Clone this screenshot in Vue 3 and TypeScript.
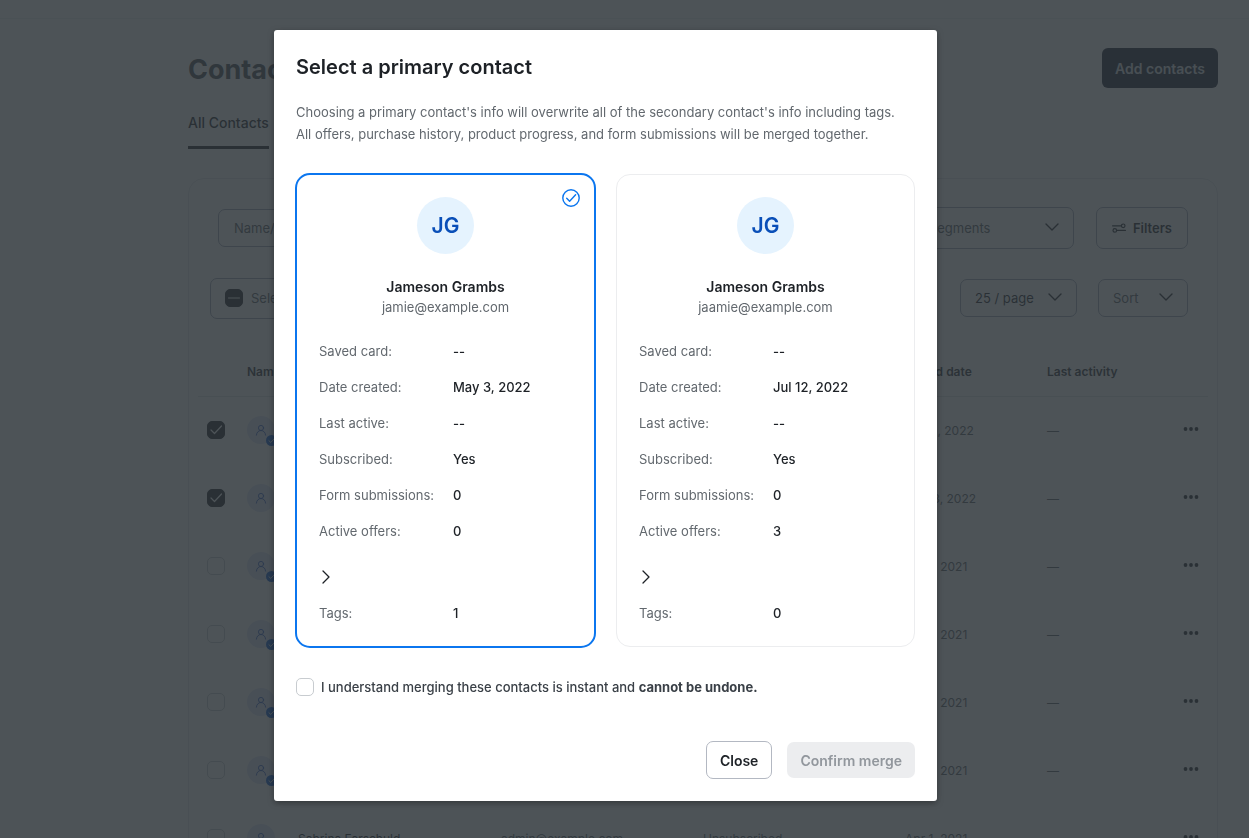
<script setup lang="ts">
import { ref } from 'vue'

interface Detail {
  label: string
  value: string
}

interface Candidate {
  id: string
  name: string
  email: string
  details: Detail[]
  tags: number
}

interface ContactRow {
  name: string
  email: string
  status: string
  added: string
  checked: boolean
  verified: boolean
}

const candidates: Candidate[] = [
  {
    id: 'jamie',
    name: 'Jameson Grambs',
    email: 'jamie@example.com',
    details: [
      { label: 'Saved card:', value: '--' },
      { label: 'Date created:', value: 'May 3, 2022' },
      { label: 'Last active:', value: '--' },
      { label: 'Subscribed:', value: 'Yes' },
      { label: 'Form submissions:', value: '0' },
      { label: 'Active offers:', value: '0' },
    ],
    tags: 1,
  },
  {
    id: 'jaamie',
    name: 'Jameson Grambs',
    email: 'jaamie@example.com',
    details: [
      { label: 'Saved card:', value: '--' },
      { label: 'Date created:', value: 'Jul 12, 2022' },
      { label: 'Last active:', value: '--' },
      { label: 'Subscribed:', value: 'Yes' },
      { label: 'Form submissions:', value: '0' },
      { label: 'Active offers:', value: '3' },
    ],
    tags: 0,
  },
]

const rows = ref<ContactRow[]>([
  { name: '', email: '', status: '', added: 'Jul 12, 2022', checked: true, verified: true },
  { name: '', email: '', status: '', added: 'May 3, 2022', checked: true, verified: false },
  { name: '', email: '', status: '', added: 'Apr 1, 2021', checked: false, verified: true },
  { name: '', email: '', status: '', added: 'Apr 1, 2021', checked: false, verified: true },
  { name: '', email: '', status: '', added: 'Apr 1, 2021', checked: false, verified: true },
  { name: '', email: '', status: '', added: 'Apr 1, 2021', checked: false, verified: true },
  { name: 'Sabrina Farschuld', email: 'admin@example.com', status: 'Unsubscribed', added: 'Apr 1, 2021', checked: false, verified: true },
])

const primary = ref('jamie')
const understood = ref(false)
</script>

<template>
  <div class="page">
    <div class="topbar"></div>
    <main class="content">
      <header class="head">
        <h1>Contacts</h1>
        <button type="button" class="add">Add contacts</button>
      </header>
      <nav class="tabs"><a href="#all">All Contacts</a></nav>

      <section class="panel">
        <div class="bar">
          <input class="field search" type="text" placeholder="Name/Email" aria-label="Search contacts" />
          <span class="pick segments">
            <select class="field" aria-label="Segments"><option>Segments</option></select>
            <svg class="down" viewBox="0 0 14 8"><path d="M1 1l6 6 6-6" /></svg>
          </span>
          <button type="button" class="field filters">
            <svg viewBox="0 0 14 10"><circle cx="11.200" cy="2.800" r="1.800" /><path d="M0.600 2.800h8.600" /><circle cx="2.800" cy="7.400" r="1.800" /><path d="M4.800 7.400h8.600" /></svg>
            Filters
          </button>
        </div>
        <div class="bar second">
          <label class="field all">
            <input type="checkbox" class="tick partial" checked />
            Selected
          </label>
          <span class="pick size">
            <select class="field" aria-label="Page size"><option>25 / page</option></select>
            <svg class="down" viewBox="0 0 14 8"><path d="M1 1l6 6 6-6" /></svg>
          </span>
          <span class="pick sort">
            <select class="field" aria-label="Sort"><option>Sort</option></select>
            <svg class="down" viewBox="0 0 14 8"><path d="M1 1l6 6 6-6" /></svg>
          </span>
        </div>

        <table>
          <colgroup>
            <col class="c-tick" /><col class="c-icon" /><col class="c-name" /><col class="c-mail" />
            <col class="c-status" /><col class="c-date" /><col /><col class="c-more" />
          </colgroup>
          <thead>
            <tr>
              <th></th>
              <th colspan="2">Name</th>
              <th>Email</th>
              <th>Status</th>
              <th>Added date</th>
              <th>Last activity</th>
              <th></th>
            </tr>
          </thead>
          <tbody>
            <tr v-for="(row, i) in rows" :key="i">
              <td><input v-model="row.checked" type="checkbox" class="tick" :aria-label="`Select row ${i + 1}`" /></td>
              <td>
                <span class="person">
                  <svg class="user" viewBox="0 0 14 14"><circle cx="7" cy="4.6" r="3" /><path d="M1.6 13c.3-3.3 2.5-5.4 5.4-5.4s5.100 2.100 5.400 5.400" /></svg>
                  <svg v-if="row.verified" class="seal" viewBox="0 0 12 12"><circle cx="6" cy="6" r="6" /><path d="M3.200 6.200l2 1.900 3.600-3.900" /></svg>
                </span>
              </td>
              <td class="strong">{{ row.name }}</td>
              <td>{{ row.email }}</td>
              <td>{{ row.status }}</td>
              <td>{{ row.added }}</td>
              <td>—</td>
              <td>
                <button type="button" class="more" aria-label="More actions">
                  <svg viewBox="0 0 16 4"><circle cx="2.500" cy="2" r="1.900" /><circle cx="8" cy="2" r="1.900" /><circle cx="13.500" cy="2" r="1.900" /></svg>
                </button>
              </td>
            </tr>
          </tbody>
        </table>
      </section>
    </main>
  </div>

  <div class="overlay">
    <div class="modal" role="dialog" aria-modal="true" aria-labelledby="merge-title">
      <h2 id="merge-title">Select a primary contact</h2>
      <p class="intro">
        Choosing a primary contact's info will overwrite all of the secondary contact's info including tags.<br />
        All offers, purchase history, product progress, and form submissions will be merged together.
      </p>

      <div class="cards">
        <article v-for="c in candidates" :key="c.id" class="card" :class="{ selected: primary === c.id }">
          <label class="choose">
            <input v-model="primary" type="radio" name="primary" :value="c.id" :aria-label="`Use ${c.email} as primary`" />
            <svg v-if="primary === c.id" viewBox="0 0 18 18"><circle cx="9" cy="9" r="8.200" /><path d="M4.700 9.300l2.900 2.900 6-6.500" /></svg>
          </label>
          <div class="initials">JG</div>
          <h3>{{ c.name }}</h3>
          <p class="mail">{{ c.email }}</p>
          <dl>
            <div v-for="d in c.details" :key="d.label" class="line">
              <dt>{{ d.label }}</dt>
              <dd>{{ d.value }}</dd>
            </div>
          </dl>
          <button type="button" class="expand" aria-label="Show offers">
            <svg viewBox="0 0 8 14"><path d="M1 1l6 6-6 6" /></svg>
          </button>
          <dl>
            <div class="line">
              <dt>Tags:</dt>
              <dd>{{ c.tags }}</dd>
            </div>
          </dl>
        </article>
      </div>

      <label class="consent">
        <input v-model="understood" type="checkbox" />
        <span>I understand merging these contacts is instant and <strong>cannot be undone.</strong></span>
      </label>

      <footer>
        <button type="button" class="close">Close</button>
        <button type="button" class="confirm" :disabled="!understood">Confirm merge</button>
      </footer>
    </div>
  </div>
</template>

<style>
body {
  margin: 0;
  overflow: hidden;
}
</style>

<style scoped>
* {
  box-sizing: border-box;
}

.page,
.overlay,
button,
input,
select {
  font-family: Inter, 'Liberation Sans', sans-serif;
  font-size: 13px;
}

svg {
  display: block;
  fill: none;
  stroke: currentColor;
  stroke-linecap: round;
  stroke-linejoin: round;
}

.page {
  height: 100vh;
  overflow: hidden;
  background: #fff;
  color: #50565e;
}

.topbar {
  height: 19px;
  border-bottom: 1px solid #eceef0;
}

.content {
  padding: 29px 31px 0 188px;
}

.head {
  display: flex;
  justify-content: space-between;
  align-items: center;
  height: 40px;
}

h1 {
  margin: 4px 0 0;
  font-size: 27px;
  line-height: 40px;
  font-weight: 700;
  color: #3c424c;
}

.add {
  height: 40px;
  padding: 0 13px;
  border: 0;
  border-radius: 6px;
  background: #10162a;
  color: #dfe2e6;
  font-size: 14px;
  font-weight: 600;
}

.tabs {
  display: flex;
  height: 61px;
  padding-top: 24px;
}

.tabs a {
  border-bottom: 3px solid #14181f;
  font-size: 14px;
  line-height: 22px;
  font-weight: 500;
  color: #14181f;
  text-decoration: none;
}

.panel {
  margin-top: 29px;
  padding: 28px 9px 0;
  border: 1px solid #e2e5e8;
  border-radius: 16px;
}

.bar {
  display: flex;
  align-items: center;
  gap: 22px;
  height: 42px;
  padding: 0 20px;
}

.second {
  gap: 21px;
  margin-top: 28px;
  padding-left: 12px;
}

.field {
  border: 1px solid #98a0b4;
  border-radius: 7px;
  background: #fff;
  color: #50565e;
}

.search {
  flex: 1;
  height: 38px;
  padding: 0 15px;
}

.search::placeholder {
  color: #50565e;
}

.pick {
  position: relative;
  display: flex;
}

.pick select {
  width: 100%;
  height: 38px;
  padding: 0 14px;
  appearance: none;
}

.pick .down {
  position: absolute;
  right: 15px;
  top: 50%;
  width: 14px;
  height: 8px;
  margin-top: -5px;
  color: #14181f;
  stroke-width: 1.4;
}

.segments {
  width: 160px;
}

.segments select {
  height: 42px;
}

.size {
  width: 117px;
  margin-left: auto;
}

.size select {
  color: #14181f;
}

.sort {
  width: 90px;
}

.filters {
  display: flex;
  align-items: center;
  gap: 7px;
  height: 42px;
  padding: 0 15px;
  color: #14181f;
  font-weight: 600;
}

.filters svg {
  width: 14px;
  height: 10px;
  stroke-width: 1.2;
}

.all {
  display: flex;
  align-items: center;
  gap: 8px;
  height: 41px;
  padding: 0 14px;
}

.tick {
  display: block;
  width: 18px;
  height: 18px;
  margin: 0;
  appearance: none;
  border: 1px solid #c0c6cc;
  border-radius: 5px;
}

.tick:checked {
  border-color: #14181f;
  background: #14181f url("data:image/svg+xml,%3Csvg xmlns='http://www.w3.org/2000/svg' viewBox='0 0 16 16' fill='none' stroke='%23ffffff' stroke-width='1.200' stroke-linecap='round' stroke-linejoin='round'%3E%3Cpath d='M3 8l3.500 3.500 7-7.500'/%3E%3C/svg%3E") center / 16px no-repeat;
}

.partial:checked {
  background-image: url("data:image/svg+xml,%3Csvg xmlns='http://www.w3.org/2000/svg' viewBox='0 0 16 16' stroke='%23ffffff' stroke-linecap='round'%3E%3Cpath d='M2.500 8h11'/%3E%3C/svg%3E");
}

table {
  width: 100%;
  margin-top: 29px;
  border-collapse: collapse;
  table-layout: fixed;
  font-size: 12px;
}

.c-tick {
  width: 49px;
}

.c-icon {
  width: 51px;
}

.c-name {
  width: 203px;
}

.c-mail {
  width: 202px;
}

.c-status {
  width: 202px;
}

.c-date {
  width: 142px;
}

.c-more {
  width: 25px;
}

th,
td {
  padding: 0;
  text-align: left;
  white-space: nowrap;
  font-weight: 400;
}

th {
  height: 48px;
  border-bottom: 1px solid #dde0e3;
  color: #22272e;
  font-weight: 600;
}

td {
  height: 68px;
}

td .tick {
  margin-left: 9px;
}

.strong {
  color: #14181f;
}

.person {
  position: relative;
  display: flex;
  align-items: center;
  justify-content: center;
  width: 28px;
  height: 28px;
  border-radius: 50%;
  background: #dce2f6;
  color: #1c4fc0;
}

.user {
  width: 12px;
  height: 12px;
}

.seal {
  position: absolute;
  right: -2px;
  bottom: -2px;
  width: 11px;
  height: 11px;
}

.seal circle {
  fill: #0052d0;
  stroke: none;
}

.seal path {
  stroke: #fff;
}

.more {
  padding: 0;
  border: 0;
  background: none;
  color: #14181f;
}

.more svg {
  width: 16px;
  height: 4px;
  margin-bottom: 4px;
  fill: currentColor;
  stroke: none;
}

.overlay {
  position: fixed;
  inset: 0;
  display: flex;
  align-items: flex-start;
  justify-content: center;
  padding: 30px 38px 0 0;
  background: rgba(46, 53, 57, 0.85);
}

.modal {
  width: 100%;
  max-width: 663px;
  padding: 22px;
  border-radius: 3px;
  background: #fff;
  box-shadow: 0 2px 6px rgba(0, 0, 0, 0.35);
  color: #1d2126;
}

h2 {
  margin: 0;
  font-size: 20px;
  line-height: 30px;
  font-weight: 600;
}

.intro {
  margin: 19px 0 29px;
  line-height: 22px;
  color: #62686e;
}

.cards {
  display: grid;
  grid-template-columns: 1fr 1fr;
  gap: 21px;
}

.card {
  position: relative;
  padding: 22px 22px 15px;
  border: 1px solid #ecedef;
  border-radius: 14px;
}

.selected {
  margin: -1px;
  border: 2px solid #0b76ef;
  border-radius: 15px;
}

.choose {
  position: absolute;
  top: 14px;
  right: 14px;
  width: 18px;
  height: 18px;
  color: #0b76ef;
}

.choose input {
  position: absolute;
  inset: 0;
  margin: 0;
  opacity: 0;
}

.choose svg {
  width: 18px;
  height: 18px;
  stroke-width: 1.4;
}

.initials {
  display: flex;
  align-items: center;
  justify-content: center;
  width: 57px;
  height: 57px;
  margin: 0 auto 22px;
  border-radius: 50%;
  background: #e5f3fe;
  color: #0a4fb8;
  font-size: 21px;
  font-weight: 600;
}

h3,
.mail {
  margin: 0;
  font-size: 13px;
  line-height: 21px;
  text-align: center;
}

h3 {
  font-size: 14px;
  font-weight: 600;
}

.mail {
  margin-bottom: 15px;
  color: #62686e;
}

dl {
  margin: 0;
}

.line {
  display: grid;
  grid-template-columns: 134px 1fr;
  line-height: 36px;
}

dt {
  color: #62686e;
}

dd {
  margin: 0;
  font-weight: 500;
}

.expand {
  display: block;
  margin: 18px 0 8px;
  padding: 3px;
  border: 0;
  background: none;
  color: #1d2126;
}

.expand svg {
  width: 8px;
  height: 14px;
  stroke-width: 1.3;
}

.consent {
  display: flex;
  align-items: center;
  gap: 7px;
  width: fit-content;
  margin-top: 29px;
  line-height: 22px;
  color: #3a4047;
}

.consent span {
  font-weight: 500;
}

.consent strong {
  font-weight: 700;
}

.consent input {
  width: 18px;
  height: 18px;
  margin: 0;
  appearance: none;
  border: 1px solid #c8ccd0;
  border-radius: 5px;
}

.consent input:checked {
  border-color: #0b76ef;
  background: #0b76ef;
}

footer {
  display: flex;
  align-items: center;
  justify-content: flex-end;
  gap: 15px;
  margin-top: 43px;
}

footer button {
  height: 38px;
  padding: 0 13px;
  border: 1px solid #b3b8c2;
  border-radius: 7px;
  background: #fff;
  color: #1d2126;
  font-size: 14px;
  font-weight: 600;
}

footer .confirm {
  height: 36px;
  border: 0;
  background: #ecedef;
  color: #92979d;
}
</style>
